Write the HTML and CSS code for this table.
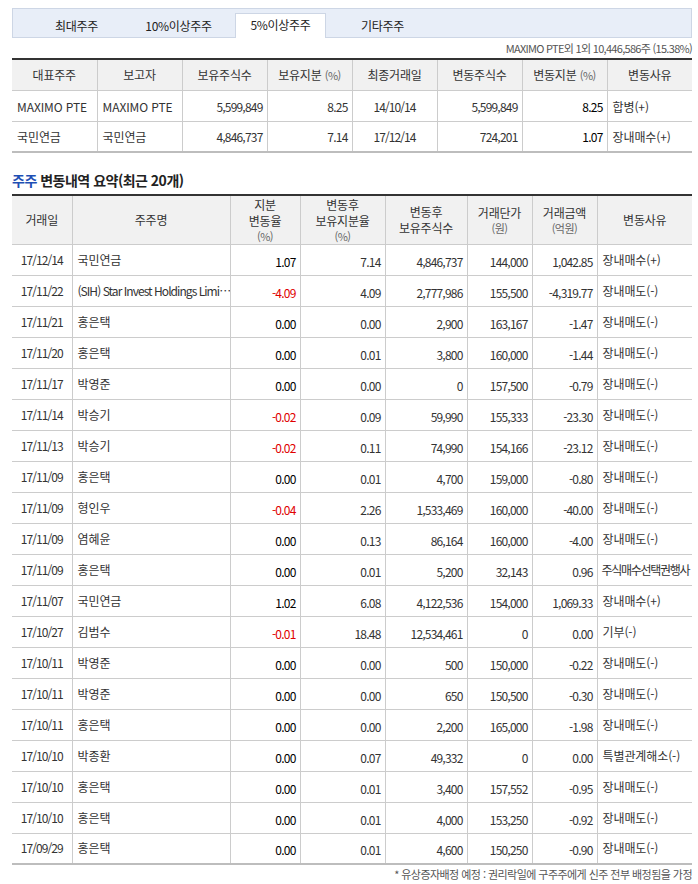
FILE: index.html
```html
<!DOCTYPE html>
<html lang="ko">
<head>
<meta charset="utf-8">
<link rel="stylesheet" href="styles.css">
</head>
<body>
<div class="wrap">
  <ul class="tabs">
    <li class="tab">최대주주</li>
    <li class="tab">10%이상주주</li>
    <li class="tab active">5%이상주주</li>
    <li class="tab">기타주주</li>
  </ul>
  <div class="summary">MAXIMO PTE외 1외 10,446,586주 (15.38%)</div>
  <table class="grid top">
    <colgroup>
      <col class="c85"><col class="c85"><col class="c85"><col class="c85"><col class="c85"><col class="c85"><col class="c85"><col class="c85">
    </colgroup>
    <thead>
      <tr>
        <th>대표주주</th><th>보고자</th><th>보유주식수</th><th>보유지분 <span class="unit">(%)</span></th><th>최종거래일</th><th>변동주식수</th><th>변동지분 <span class="unit">(%)</span></th><th>변동사유</th>
      </tr>
    </thead>
    <tbody>
      <tr><td class="l">MAXIMO PTE</td><td class="l">MAXIMO PTE</td><td class="r">5,599,849</td><td class="r">8.25</td><td class="c">14/10/14</td><td class="r">5,599,849</td><td class="r dark">8.25</td><td class="l">합병(+)</td></tr>
      <tr><td class="l">국민연금</td><td class="l">국민연금</td><td class="r">4,846,737</td><td class="r">7.14</td><td class="c">17/12/14</td><td class="r">724,201</td><td class="r dark">1.07</td><td class="l">장내매수(+)</td></tr>
    </tbody>
  </table>

  <h3 class="title"><span class="blue">주주</span> 변동내역 요약(최근 20개)</h3>

  <table class="grid main">
    <colgroup>
      <col class="w60"><col class="w158"><col class="w70"><col class="w85"><col class="w82"><col class="w65"><col class="w65"><col class="w95">
    </colgroup>
    <thead>
      <tr>
        <th><span class="ln">거래일</span></th>
        <th><span class="ln">주주명</span></th>
        <th><span class="ln">지분</span><span class="ln">변동율</span><span class="ln unit">(%)</span></th>
        <th><span class="ln">변동후</span><span class="ln">보유지분율</span><span class="ln unit">(%)</span></th>
        <th><span class="ln">변동후</span><span class="ln">보유주식수</span></th>
        <th><span class="ln">거래단가</span><span class="ln unit">(원)</span></th>
        <th><span class="ln">거래금액</span><span class="ln unit">(억원)</span></th>
        <th><span class="ln">변동사유</span></th>
      </tr>
    </thead>
    <tbody>
      <tr><td class="c">17/12/14</td><td class="l">국민연금</td><td class="r dark">1.07</td><td class="r">7.14</td><td class="r">4,846,737</td><td class="r">144,000</td><td class="r">1,042.85</td><td class="l">장내매수(+)</td></tr>
      <tr><td class="c">17/11/22</td><td class="l latin">(SIH) Star Invest Holdings Limi…</td><td class="r neg">-4.09</td><td class="r">4.09</td><td class="r">2,777,986</td><td class="r">155,500</td><td class="r">-4,319.77</td><td class="l">장내매도(-)</td></tr>
      <tr><td class="c">17/11/21</td><td class="l">홍은택</td><td class="r dark">0.00</td><td class="r">0.00</td><td class="r">2,900</td><td class="r">163,167</td><td class="r">-1.47</td><td class="l">장내매도(-)</td></tr>
      <tr><td class="c">17/11/20</td><td class="l">홍은택</td><td class="r dark">0.00</td><td class="r">0.01</td><td class="r">3,800</td><td class="r">160,000</td><td class="r">-1.44</td><td class="l">장내매도(-)</td></tr>
      <tr><td class="c">17/11/17</td><td class="l">박영준</td><td class="r dark">0.00</td><td class="r">0.00</td><td class="r">0</td><td class="r">157,500</td><td class="r">-0.79</td><td class="l">장내매도(-)</td></tr>
      <tr><td class="c">17/11/14</td><td class="l">박승기</td><td class="r neg">-0.02</td><td class="r">0.09</td><td class="r">59,990</td><td class="r">155,333</td><td class="r">-23.30</td><td class="l">장내매도(-)</td></tr>
      <tr><td class="c">17/11/13</td><td class="l">박승기</td><td class="r neg">-0.02</td><td class="r">0.11</td><td class="r">74,990</td><td class="r">154,166</td><td class="r">-23.12</td><td class="l">장내매도(-)</td></tr>
      <tr><td class="c">17/11/09</td><td class="l">홍은택</td><td class="r dark">0.00</td><td class="r">0.01</td><td class="r">4,700</td><td class="r">159,000</td><td class="r">-0.80</td><td class="l">장내매도(-)</td></tr>
      <tr><td class="c">17/11/09</td><td class="l">형인우</td><td class="r neg">-0.04</td><td class="r">2.26</td><td class="r">1,533,469</td><td class="r">160,000</td><td class="r">-40.00</td><td class="l">장내매도(-)</td></tr>
      <tr><td class="c">17/11/09</td><td class="l">염혜윤</td><td class="r dark">0.00</td><td class="r">0.13</td><td class="r">86,164</td><td class="r">160,000</td><td class="r">-4.00</td><td class="l">장내매도(-)</td></tr>
      <tr><td class="c">17/11/09</td><td class="l">홍은택</td><td class="r dark">0.00</td><td class="r">0.01</td><td class="r">5,200</td><td class="r">32,143</td><td class="r">0.96</td><td class="l tight">주식매수선택권행사</td></tr>
      <tr><td class="c">17/11/07</td><td class="l">국민연금</td><td class="r dark">1.02</td><td class="r">6.08</td><td class="r">4,122,536</td><td class="r">154,000</td><td class="r">1,069.33</td><td class="l">장내매수(+)</td></tr>
      <tr><td class="c">17/10/27</td><td class="l">김범수</td><td class="r neg">-0.01</td><td class="r">18.48</td><td class="r">12,534,461</td><td class="r">0</td><td class="r">0.00</td><td class="l">기부(-)</td></tr>
      <tr><td class="c">17/10/11</td><td class="l">박영준</td><td class="r dark">0.00</td><td class="r">0.00</td><td class="r">500</td><td class="r">150,000</td><td class="r">-0.22</td><td class="l">장내매도(-)</td></tr>
      <tr><td class="c">17/10/11</td><td class="l">박영준</td><td class="r dark">0.00</td><td class="r">0.00</td><td class="r">650</td><td class="r">150,500</td><td class="r">-0.30</td><td class="l">장내매도(-)</td></tr>
      <tr><td class="c">17/10/11</td><td class="l">홍은택</td><td class="r dark">0.00</td><td class="r">0.00</td><td class="r">2,200</td><td class="r">165,000</td><td class="r">-1.98</td><td class="l">장내매도(-)</td></tr>
      <tr><td class="c">17/10/10</td><td class="l">박종환</td><td class="r dark">0.00</td><td class="r">0.07</td><td class="r">49,332</td><td class="r">0</td><td class="r">0.00</td><td class="l">특별관계해소(-)</td></tr>
      <tr><td class="c">17/10/10</td><td class="l">홍은택</td><td class="r dark">0.00</td><td class="r">0.01</td><td class="r">3,400</td><td class="r">157,552</td><td class="r">-0.95</td><td class="l">장내매도(-)</td></tr>
      <tr><td class="c">17/10/10</td><td class="l">홍은택</td><td class="r dark">0.00</td><td class="r">0.01</td><td class="r">4,000</td><td class="r">153,250</td><td class="r">-0.92</td><td class="l">장내매도(-)</td></tr>
      <tr><td class="c">17/09/29</td><td class="l">홍은택</td><td class="r dark">0.00</td><td class="r">0.01</td><td class="r">4,600</td><td class="r">150,250</td><td class="r">-0.90</td><td class="l">장내매도(-)</td></tr>
    </tbody>
  </table>
  <p class="note">* 유상증자배정 예정 : 권리락일에 구주주에게 신주 전부 배정됨을 가정</p>
</div>
</body>
</html>
```

FILE: styles.css
```css
* { box-sizing: border-box; }
html, body { margin: 0; padding: 0; background: #fff; }
body {
  font-family: "Noto Sans CJK KR", "Noto Sans", sans-serif;
  font-size: 12px;
  color: #333;
}
.wrap {
  width: 680px;
  margin: 8px 0 0 12px;
}
.tabs {
  list-style: none;
  margin: 0;
  padding: 0 0 0 18px;
  height: 30px;
  border: 1px solid #cdd6e5;
  background: #e8eef8;
  display: flex;
  align-items: flex-end;
  gap: 11px;
}
.tab {
  width: 91px;
  height: 24px;
  line-height: 22px;
  text-align: center;
  color: #222;
  font-size: 12px;
  letter-spacing: -0.3px;
  margin-bottom: -1px;
  border: 1px solid transparent;
  border-bottom: none;
}
.tab.active {
  background: #fff;
  border-color: #cdd6e5;
  height: 25px;
}
.summary {
  height: 20px;
  line-height: 20px;
  text-align: right;
  font-size: 11px;
  color: #555;
  letter-spacing: -0.7px;
}
.grid {
  width: 680px;
  border-collapse: collapse;
  table-layout: fixed;
  border-top: 2px solid #333;
  border-bottom: 2px solid #bdbdbd;
}
.c85 { width: 85px; }
.w60 { width: 60px; }
.w158 { width: 158px; }
.w70 { width: 70px; }
.w85 { width: 85px; }
.w82 { width: 82px; }
.w65 { width: 65px; }
.w95 { width: 95px; }
.grid th {
  background: #f1f1f1;
  font-weight: normal;
  color: #333;
  border: 1px solid #cccccc;
  border-top: none;
  text-align: center;
  padding: 0;
  line-height: 16px;
  letter-spacing: -0.2px;
}
.ln {
  display: block;
  height: 16px;
  line-height: 16px;
}
.ln.unit {
  height: 14px;
  line-height: 14px;
}
.grid td {
  border: 1px solid #cccccc;
  padding: 2px 4px 0 5px;
  white-space: nowrap;
  overflow: hidden;
  line-height: 16px;
  color: #333;
}
.grid th:first-child, .grid td:first-child { border-left: none; }
.grid th:last-child, .grid td:last-child { border-right: none; padding-right: 0; text-overflow: clip; }
.top thead tr { height: 31px; }
.top tbody tr { height: 31px; }
.main thead tr { height: 49px; }
.main tbody tr { height: 31px; }
.unit { font-size: 11px; color: #666; letter-spacing: -0.5px; }
.l { text-align: left; letter-spacing: -0.1px; }
.grid td.latin { letter-spacing: -0.95px; padding-left: 5px; padding-right: 0; }
.grid td.tight { letter-spacing: -1.3px; padding-left: 4px; }
.r { text-align: right; padding-right: 4px; letter-spacing: -0.8px; }
.c { text-align: center; padding-left: 0 !important; padding-right: 0 !important; letter-spacing: -0.9px; }
.dark { color: #000 !important; }
.neg { color: #e00000 !important; }
.main td.r { padding-top: 4px; }
.main td.l, .main td.c { padding-bottom: 2px; }
.title {
  margin: 18px 0 0 0;
  height: 23px;
  font-size: 14px;
  font-weight: bold;
  color: #222;
  line-height: 18px;
  letter-spacing: -0.5px;
}
.blue { color: #1e4fb4; }
.note {
  margin: 0;
  text-align: right;
  font-size: 11px;
  color: #555;
  line-height: 16px;
  padding-top: 1px;
  white-space: nowrap;
  letter-spacing: -0.55px;
}
```
